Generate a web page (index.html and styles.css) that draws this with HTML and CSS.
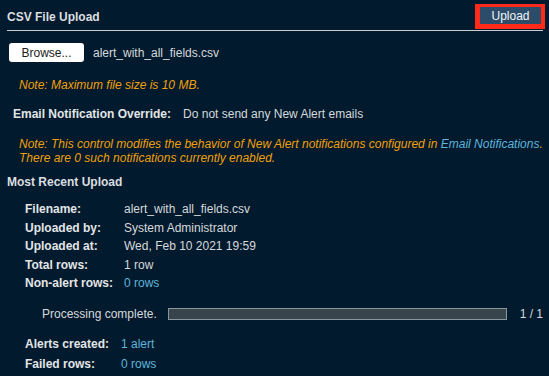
FILE: index.html
```html
<!DOCTYPE html>
<html lang="en">
<head>
    <meta charset="UTF-8">
    <title>CSV File Upload</title>
    <link rel="stylesheet" href="styles.css">
</head>
<body>
    <div class="panel">
        <div class="panel-header">
            <h2>CSV File Upload</h2>
            <div class="upload-wrap"><button class="upload-button">Upload</button></div>
        </div>

        <div class="file-row">
            <button class="browse-button">Browse...</button>
            <span class="file-name">alert_with_all_fields.csv</span>
        </div>
        <p class="note note-size">Note: Maximum file size is 10 MB.</p>

        <div class="override-row">
            <span class="label">Email Notification Override:</span>
            <span class="value">Do not send any New Alert emails</span>
        </div>
        <p class="note note-override">Note: This control modifies the behavior of New Alert notifications configured in <a href="#">Email Notifications</a>.<br>There are 0 such notifications currently enabled.</p>

        <h3>Most Recent Upload</h3>
        <div class="details">
            <span class="label">Filename:</span><span class="value">alert_with_all_fields.csv</span>
            <span class="label">Uploaded by:</span><span class="value">System Administrator</span>
            <span class="label">Uploaded at:</span><span class="value">Wed, Feb 10 2021 19:59</span>
            <span class="label">Total rows:</span><span class="value">1 row</span>
            <span class="label">Non-alert rows:</span><a class="value" href="#">0 rows</a>
        </div>

        <div class="progress-row">
            <span class="progress-text">Processing complete.</span>
            <div class="progress-bar"><div class="progress-fill"></div></div>
            <span class="progress-count">1 / 1</span>
        </div>

        <div class="results">
            <span class="label">Alerts created:</span><a class="value" href="#">1 alert</a>
            <span class="label">Failed rows:</span><a class="value" href="#">0 rows</a>
        </div>
    </div>
</body>
</html>
```

FILE: styles.css
```css
* {
    margin: 0;
    padding: 0;
    box-sizing: border-box;
}

body {
    background: #021a2d;
    color: #d6d9dc;
    font-family: 'Liberation Sans', Arial, sans-serif;
    font-size: 12px;
    width: 549px;
    height: 376px;
    overflow: hidden;
}

.panel {
    padding: 4px 6px 0 7px;
}

.panel-header {
    display: flex;
    justify-content: space-between;
    align-items: center;
    border-bottom: 1px solid #c9ccce;
    height: 27px;
}

.panel-header h2 {
    font-size: 12px;
    font-weight: bold;
    color: #dcdee0;
}

/* highlighted upload action */
.upload-wrap {
    align-self: flex-start;
    background: #ff2a1a;
    padding: 3px 4px 5px 5px;
    margin-right: -2px;
}

.upload-button {
    display: block;
    background: #2c4c69;
    color: #f2f4f6;
    border: none;
    font-family: inherit;
    font-size: 12px;
    width: 61px;
    height: 17px;
}

a {
    color: #5eb4dc;
    text-decoration: none;
}

.label {
    font-weight: bold;
    color: #e3e5e7;
}

.file-row {
    display: flex;
    align-items: center;
    gap: 9px;
    margin: 12px 0 0 2px;
}

.browse-button {
    background: #fff;
    color: #1a1a1a;
    border: none;
    border-radius: 3px;
    font-family: inherit;
    font-size: 12px;
    width: 75px;
    height: 19px;
}

.note {
    color: #f0a00a;
    font-style: italic;
    font-size: 12px;
    line-height: 14.7px;
    padding-left: 12px;
}

.note-size {
    margin-top: 16px;
}

.override-row {
    display: flex;
    gap: 12px;
    margin: 14px 0 0 6px;
}

.note-override {
    margin-top: 16px;
}

.panel h3 {
    font-size: 12px;
    font-weight: bold;
    color: #dcdee0;
    margin-top: 9px;
}

.details {
    display: grid;
    grid-template-columns: 99px auto;
    row-gap: 4px;
    line-height: 14.6px;
    margin: 13px 0 0 18px;
}

.progress-row {
    display: flex;
    align-items: center;
    margin: 16px 0 0 35px;
}

.progress-text {
    width: 127px;
    white-space: nowrap;
}

.progress-bar {
    flex-shrink: 0;
    width: 339px;
    height: 12px;
    border: 1px solid #8a959c;
    background: #37444c;
}

.progress-fill {
    height: 100%;
    width: 100%;
    background: #37444c;
}

.progress-count {
    margin-left: 13px;
    white-space: nowrap;
}

.results {
    display: grid;
    grid-template-columns: 96px auto;
    row-gap: 5.5px;
    line-height: 14.6px;
    margin: 16px 0 0 18px;
}
```
